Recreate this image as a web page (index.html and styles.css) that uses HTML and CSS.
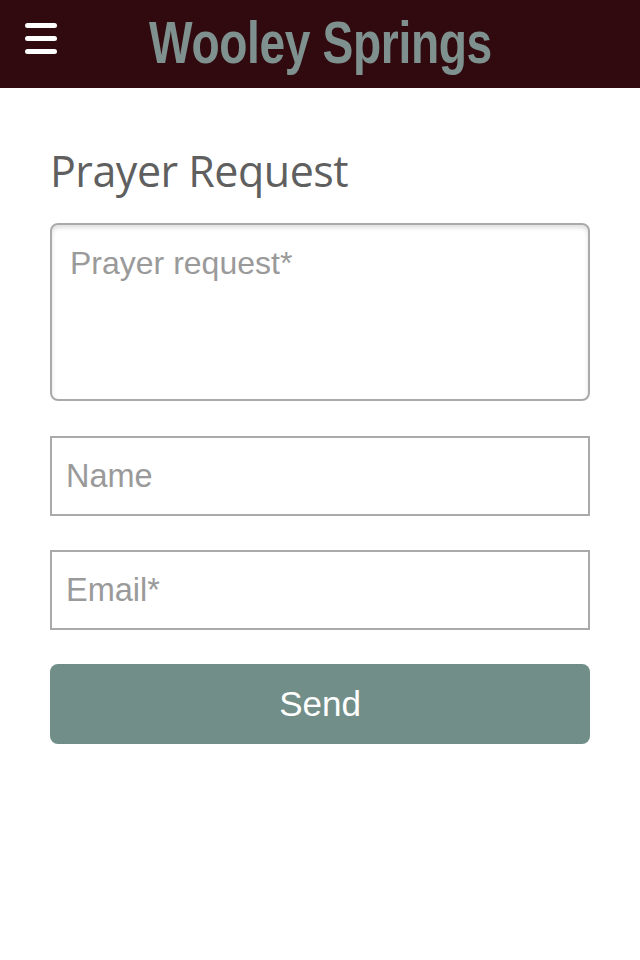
FILE: index.html
```html
<!DOCTYPE html>
<html>
  <head>
    <meta charset="utf-8" />
    <meta name="viewport" content="width=device-width" />
    <title>Wooley Springs - Prayer Request</title>
    <link rel="stylesheet" href="styles.css">
  </head>
  <body>
    <header class="topbar">
      <button class="menu-btn" aria-label="Menu">
        <span></span><span></span><span></span>
      </button>
      <h1 class="brand"><span>Wooley Springs</span></h1>
    </header>

    <main class="content">
      <h2 class="page-title">Prayer Request</h2>
      <form class="prayer-form">
        <textarea class="field field-area" placeholder="Prayer request*"></textarea>
        <input class="field" type="text" placeholder="Name" />
        <input class="field" type="email" placeholder="Email*" />
        <button class="send" type="button">Send</button>
      </form>
    </main>
  </body>
</html>
```

FILE: styles.css
```css
body {
  margin: 0;
  background: #fff;
  font-family: "Liberation Sans", Arial, sans-serif;
}

.topbar {
  height: 88px;
  background: #300a0f;
  display: flex;
  align-items: flex-start;
  box-sizing: border-box;
}

.menu-btn {
  background: none;
  border: 0;
  padding: 0;
  margin: 23px 0 0 25px;
  width: 32px;
  display: flex;
  flex-direction: column;
  gap: 8px;
  cursor: pointer;
}

.menu-btn span {
  display: block;
  height: 5px;
  border-radius: 3px;
  background: #fff;
}

.brand {
  margin: 0 0 0 92px;
  padding-top: 8px;
  font-family: "Liberation Sans", sans-serif;
  font-size: 60px;
  line-height: 70px;
  font-weight: bold;
  color: #7f918e;
  letter-spacing: -0.5px;
  white-space: nowrap;
}

.brand span {
  display: inline-block;
  transform: scaleX(0.77);
  transform-origin: left center;
}

.content {
  padding: 0 50px;
}

.page-title {
  margin: 55px 0 24px;
  font-family: "Open Sans", sans-serif;
  font-weight: normal;
  font-size: 43px;
  line-height: 56px;
  color: #5f5f5f;
  letter-spacing: -0.5px;
}

.prayer-form {
  display: flex;
  flex-direction: column;
  gap: 34px;
}

.field {
  display: block;
  width: 100%;
  box-sizing: border-box;
  height: 80px;
  margin: 0;
  border: 2px solid #aaa;
  border-radius: 0;
  padding: 0 14px;
  font-family: "Liberation Sans", Arial, sans-serif;
  font-size: 32.5px;
  color: #333;
  background: #fff;
  outline: none;
}

.field::placeholder {
  color: #9a9a9a;
}

.field-area {
  height: 178px;
  border-radius: 8px;
  padding: 20px 18px;
  font-size: 32px;
  resize: none;
  box-shadow: inset 0 3px 4px rgba(0, 0, 0, 0.12);
  margin-bottom: 1px;
}

.send {
  height: 80px;
  border: 0;
  border-radius: 8px;
  background: #728e89;
  color: #fff;
  font-family: "Liberation Sans", Arial, sans-serif;
  font-size: 35px;
  cursor: pointer;
}
```
